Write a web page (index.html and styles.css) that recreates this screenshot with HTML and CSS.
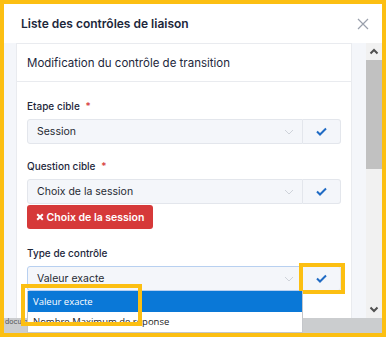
FILE: index.html
```html
<!DOCTYPE html>
<html lang="fr">
<head>
  <meta charset="UTF-8">
  <title>Liste des contrôles de liaison</title>
  <link rel="stylesheet" href="styles.css">
</head>
<body>
  <div class="modal">
    <div class="modal-header">
      <h2>Liste des contrôles de liaison</h2>
      <svg class="close" width="12" height="12" viewBox="0 0 12 12"><path d="M1 1L11 11M11 1L1 11" stroke="#9aa0ac" stroke-width="1.2"/></svg>
    </div>
    <div class="modal-body">
      <div class="content">
        <div class="card">
          <div class="card-header">Modification du contrôle de transition</div>
          <div class="card-body">
            <label>Etape cible <span class="req">*</span></label>
            <div class="input-group first">
              <div class="select">Session<svg class="chev" width="10" height="6" viewBox="0 0 10 6"><path d="M1 1L5 5L9 1" fill="none" stroke="#cfd3da" stroke-width="1"/></svg></div>
              <div class="btn-check"><svg width="11" height="9" viewBox="0 0 11 9"><path d="M1 4.5L4 7.5L10 1.5" fill="none" stroke="#206bc4" stroke-width="2"/></svg></div>
            </div>

            <label>Question cible <span class="req">*</span></label>
            <div class="input-group tight">
              <div class="select">Choix de la session<svg class="chev" width="10" height="6" viewBox="0 0 10 6"><path d="M1 1L5 5L9 1" fill="none" stroke="#cfd3da" stroke-width="1"/></svg></div>
              <div class="btn-check"><svg width="11" height="9" viewBox="0 0 11 9"><path d="M1 4.5L4 7.5L10 1.5" fill="none" stroke="#206bc4" stroke-width="2"/></svg></div>
            </div>
            <div class="btn-danger"><svg width="8" height="8" viewBox="0 0 8 8"><path d="M1.2 1.2L6.8 6.8M6.8 1.2L1.2 6.8" stroke="#fff" stroke-width="2"/></svg>Choix de la session</div>

            <label>Type de contrôle</label>
            <div class="input-group">
              <div class="select focus">Valeur exacte<svg class="chev" width="10" height="6" viewBox="0 0 10 6"><path d="M1 1L5 5L9 1" fill="none" stroke="#cfd3da" stroke-width="1"/></svg>
                <ul class="dropdown">
                  <li class="active mark">Valeur exacte</li>
                  <li>Nombre Maximum de réponse</li>
                </ul>
              </div>
              <div class="btn-check mark-btn"><svg width="11" height="9" viewBox="0 0 11 9"><path d="M1 4.5L4 7.5L10 1.5" fill="none" stroke="#206bc4" stroke-width="2"/></svg></div>
            </div>
          </div>
        </div>
        <div class="side"></div>
      </div>
      <div class="scrollbar">
        <svg class="arrow" width="16" height="16" viewBox="0 0 16 16"><path d="M4.5 10L8 6.5L11.5 10" fill="none" stroke="#505050" stroke-width="2"/></svg>
        <div class="thumb"></div>
        <div class="track"></div>
        <svg class="arrow" width="16" height="16" viewBox="0 0 16 16"><path d="M4.5 6L8 9.5L11.5 6" fill="none" stroke="#505050" stroke-width="2"/></svg>
      </div>
    </div>
    <div class="footer-band"><span>docum</span></div>
  </div>
</body>
</html>
```

FILE: styles.css
```css
* {
  box-sizing: border-box;
}
body {
  margin: 0;
  background: #fcbf12;
  font-family: Inter, "Noto Sans", sans-serif;
  color: #1d273b;
}
.modal {
  margin: 4px;
  width: 378px;
  height: 329px;
  background: #fff;
  display: flex;
  flex-direction: column;
}
.modal-header {
  height: 39px;
  display: flex;
  align-items: center;
  justify-content: space-between;
  padding: 0 13px 0 17px;
}
.modal-header h2 {
  margin: 0;
  font-size: 12px;
  font-weight: 600;
}
.modal-body {
  height: 275px;
  display: flex;
}
.content {
  flex: 1;
  display: flex;
  background: #f4f6fa;
  padding-left: 12px;
}
.card {
  width: 336px;
  background: #fff;
  border: 1px solid #e9ebef;
  border-bottom: none;
}
.side {
  flex: 1;
}
.card-header {
  height: 38px;
  border-bottom: 1px solid #e9ebef;
  display: flex;
  align-items: center;
  padding-left: 10px;
  font-size: 11.5px;
}
.card-body {
  padding: 14px 10px 0 10px;
}
label {
  display: block;
  font-size: 10px;
  font-weight: 500;
  line-height: 20px;
  margin-bottom: 3px;
}
.req {
  color: #d63939;
  margin-left: 3px;
}
.input-group {
  display: flex;
  height: 25px;
  margin-bottom: 13px;
}
.input-group.first {
  margin-bottom: 12px;
}
.input-group.tight {
  margin-bottom: 1px;
}
.select {
  position: relative;
  width: 276px;
  background: #f4f6fa;
  border: 1px solid #e3e6ec;
  border-radius: 3px 0 0 3px;
  display: flex;
  align-items: center;
  justify-content: space-between;
  padding: 0 8px 0 9px;
  font-size: 10.5px;
  color: #262a33;
}
.select.focus {
  border-color: #b8d0f0;
}
.btn-check {
  position: relative;
  width: 38px;
  background: #f4f6fa;
  border: 1px solid #e3e6ec;
  border-left: none;
  border-radius: 0 3px 3px 0;
  display: flex;
  align-items: center;
  justify-content: center;
}
.btn-danger {
  width: 126px;
  height: 24px;
  background: #d63939;
  color: #fff;
  border-radius: 3px;
  display: flex;
  align-items: center;
  justify-content: center;
  gap: 3px;
  font-size: 10.5px;
  font-weight: 600;
  white-space: nowrap;
  margin-bottom: 14px;
}
.dropdown {
  position: absolute;
  top: 24px;
  left: -1px;
  width: 276px;
  margin: 0;
  padding: 0;
  list-style: none;
  background: #fff;
  border: 1px solid #c4c6ca;
  border-top: none;
  font-family: "Open Sans", "Noto Sans", sans-serif;
  font-size: 9.5px;
  z-index: 5;
}
.dropdown li {
  height: 20px;
  line-height: 20px;
  padding-left: 5px;
  color: #222;
}
.dropdown li.active {
  height: 21px;
  line-height: 21px;
  background: #0a78d7;
  color: #fff;
}
.mark {
  position: relative;
}
.mark::after {
  content: "";
  position: absolute;
  left: -7px;
  top: -7px;
  width: 113px;
  height: 34px;
  border: 4px solid #fcbf12;
}
.mark-btn::after {
  content: "";
  position: absolute;
  inset: -4px -5px -4px -4px;
  border: 4px solid #fcbf12;
}
.scrollbar {
  width: 16px;
  background: #f1f1f1;
  display: flex;
  flex-direction: column;
}
.arrow {
  display: block;
  height: 17px;
}
.thumb {
  height: 109px;
  background: #c1c1c1;
}
.track {
  flex: 1;
}
.footer-band {
  height: 15px;
  background: #cbcdcf;
  font-size: 7px;
  line-height: 8px;
  color: #555;
  padding-left: 1px;
}
```
